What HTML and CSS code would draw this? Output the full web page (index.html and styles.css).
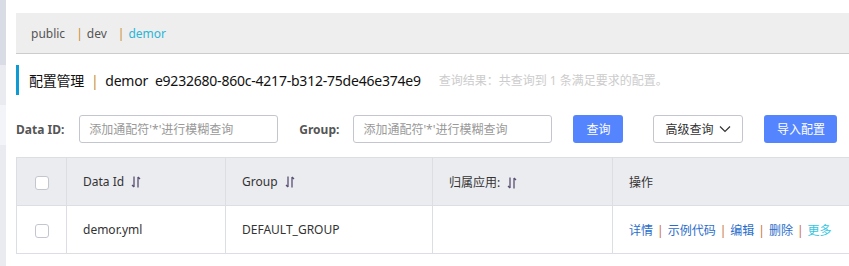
FILE: index.html
```html
<!DOCTYPE html>
<html lang="zh-CN">
<head>
    <meta charset="UTF-8">
    <title>配置管理</title>
    <link rel="stylesheet" href="styles.css">
</head>
<body>
    <div class="layout">
        <div class="side">
            <div class="side-a"></div>
            <div class="side-b"></div>
            <div class="side-c"></div>
            <div class="side-d"></div>
        </div>
        <div class="main">
            <div class="ns-bar">
                <span class="ns">public</span>
                <span class="ns"><i class="bar">|</i>dev</span>
                <span class="ns active"><i class="bar">|</i>demor</span>
            </div>

            <div class="title">
                <span class="title-main">配置管理&nbsp; <i class="bar">|</i>&nbsp; demor&nbsp; e9232680-860c-4217-b312-75de46e374e9</span>
                <span class="title-hint">查询结果：共查询到 1 条满足要求的配置。</span>
            </div>

            <div class="search">
                <label class="lbl">Data ID:</label>
                <input class="inp" type="text" placeholder="添加通配符'*'进行模糊查询">
                <label class="lbl lbl-group">Group:</label>
                <input class="inp" type="text" placeholder="添加通配符'*'进行模糊查询">
                <button class="btn primary btn-query">查询</button>
                <button class="btn normal btn-adv">高级查询
                    <svg width="12" height="8" viewBox="0 0 12 8"><path d="M1 1.5 L6 6.5 L11 1.5" fill="none" stroke="#333" stroke-width="1.2"/></svg>
                </button>
                <button class="btn primary btn-import">导入配置</button>
            </div>

            <table class="grid">
                <thead>
                    <tr>
                        <th class="c-check"><span class="box"></span></th>
                        <th class="c-id">Data Id <svg class="sort" width="10" height="12" viewBox="0 0 10 12"><path d="M3 0.5 V11 M3 11 L1 9" fill="none" stroke="#5a4f73" stroke-width="1.3"/><path d="M7 11.5 V1 M7 1 L9 3" fill="none" stroke="#5a4f73" stroke-width="1.3"/></svg></th>
                        <th class="c-group">Group <svg class="sort" width="10" height="12" viewBox="0 0 10 12"><path d="M3 0.5 V11 M3 11 L1 9" fill="none" stroke="#5a4f73" stroke-width="1.3"/><path d="M7 11.5 V1 M7 1 L9 3" fill="none" stroke="#5a4f73" stroke-width="1.3"/></svg></th>
                        <th class="c-app">归属应用: <svg class="sort" width="10" height="12" viewBox="0 0 10 12"><path d="M3 0.5 V11 M3 11 L1 9" fill="none" stroke="#5a4f73" stroke-width="1.3"/><path d="M7 11.5 V1 M7 1 L9 3" fill="none" stroke="#5a4f73" stroke-width="1.3"/></svg></th>
                        <th class="c-op">操作</th>
                    </tr>
                </thead>
                <tbody>
                    <tr>
                        <td class="c-check"><span class="box"></span></td>
                        <td>demor.yml</td>
                        <td>DEFAULT_GROUP</td>
                        <td></td>
                        <td class="ops">
                            <a>详情</a><i class="sep">|</i><a>示例代码</a><i class="sep">|</i><a>编辑</a><i class="sep">|</i><a>删除</a><i class="sep">|</i><a class="more">更多</a>
                        </td>
                    </tr>
                </tbody>
            </table>
        </div>
    </div>
</body>
</html>
```

FILE: styles.css
```css
body {
    margin: 0;
    font-family: "Noto Sans", "Noto Sans CJK SC", sans-serif;
    font-size: 12px;
    color: #333;
    background: #fff;
    overflow: hidden;
}

.layout {
    display: flex;
    height: 266px;
}

.side {
    width: 6px;
    flex: none;
    display: flex;
    flex-direction: column;
}

.side-a { height: 65px; background: #d9dce4; }
.side-b { height: 40px; background: #e9ebf0; }
.side-c { height: 40px; background: #f3f4f7; }
.side-d { flex: 1; background: #e9ebf0; }

.main {
    flex: 1;
    padding-left: 10px;
    min-width: 0;
}

.ns-bar {
    margin-top: 13px;
    height: 40px;
    background: #eee;
    border-bottom: 1px solid #ccc;
    display: flex;
    align-items: center;
    padding-left: 15px;
    font-size: 12px;
    color: #555;
}

.ns {
    margin-right: 11px;
}

.bar {
    font-style: normal;
    color: #c78a2c;
    margin-right: 4px;
}

.ns.active {
    color: #2bb5d8;
}

.title {
    margin-top: 11px;
    height: 30px;
    border-left: 3px solid #0e9ad2;
    display: flex;
    align-items: center;
    padding-left: 10px;
}

.title-main {
    font-size: 14px;
    color: #111;
    letter-spacing: -0.22px;
}

.title-main .bar {
    margin: 0;
}

.title-hint {
    margin-left: 18px;
    color: #ccc;
    font-size: 12px;
}

.search {
    margin-top: 20px;
    height: 28px;
    display: flex;
    align-items: center;
}

.lbl {
    font-weight: bold;
    color: #555;
    font-size: 12px;
    margin-right: 15px;
}

.lbl-group {
    margin-left: 21px;
    margin-right: 14px;
}

.inp {
    width: 199px;
    height: 28px;
    box-sizing: border-box;
    border: 1px solid #c4c6cf;
    border-radius: 3px;
    padding: 0 9px;
    font-family: inherit;
    font-size: 12px;
    outline: none;
}

.inp::placeholder {
    color: #999;
}

.btn {
    height: 28px;
    box-sizing: border-box;
    border-radius: 3px;
    font-family: inherit;
    font-size: 12px;
    padding: 0;
    display: flex;
    align-items: center;
    justify-content: center;
}

.primary {
    background: #5584ff;
    border: none;
    color: #fff;
}

.normal {
    background: #fff;
    border: 1px solid #c4c6cf;
    color: #333;
}

.btn-query { width: 50px; margin-left: 21px; }
.btn-adv { width: 90px; margin-left: 30px; gap: 6px; }
.btn-import { width: 73px; margin-left: 21px; }

.grid {
    margin-top: 14px;
    border-collapse: collapse;
    width: 860px;
    table-layout: fixed;
}

.grid th,
.grid td {
    border: 1px solid #dcdee3;
    text-align: left;
    padding: 0 16px;
    height: 47px;
    font-weight: normal;
    font-size: 12px;
    color: #333;
}

.grid th {
    background: #ebecf0;
}

.c-check { width: 17px; }
.c-id { width: 126px; }
.c-group { width: 174px; }
.c-app { width: 147px; }

.grid .c-check {
    text-align: center;
    padding: 0 16px;
}

.box {
    display: inline-block;
    width: 14px;
    height: 14px;
    box-sizing: border-box;
    border: 1px solid #c4c6cf;
    border-radius: 3px;
    background: #fff;
    vertical-align: middle;
}

.sort {
    vertical-align: -2px;
    margin-left: 4px;
}

.ops a {
    color: #2a6dcb;
}

.ops a.more {
    color: #33c6e3;
}

.sep {
    font-style: normal;
    color: #c7703a;
    margin: 0 4px;
}
```
